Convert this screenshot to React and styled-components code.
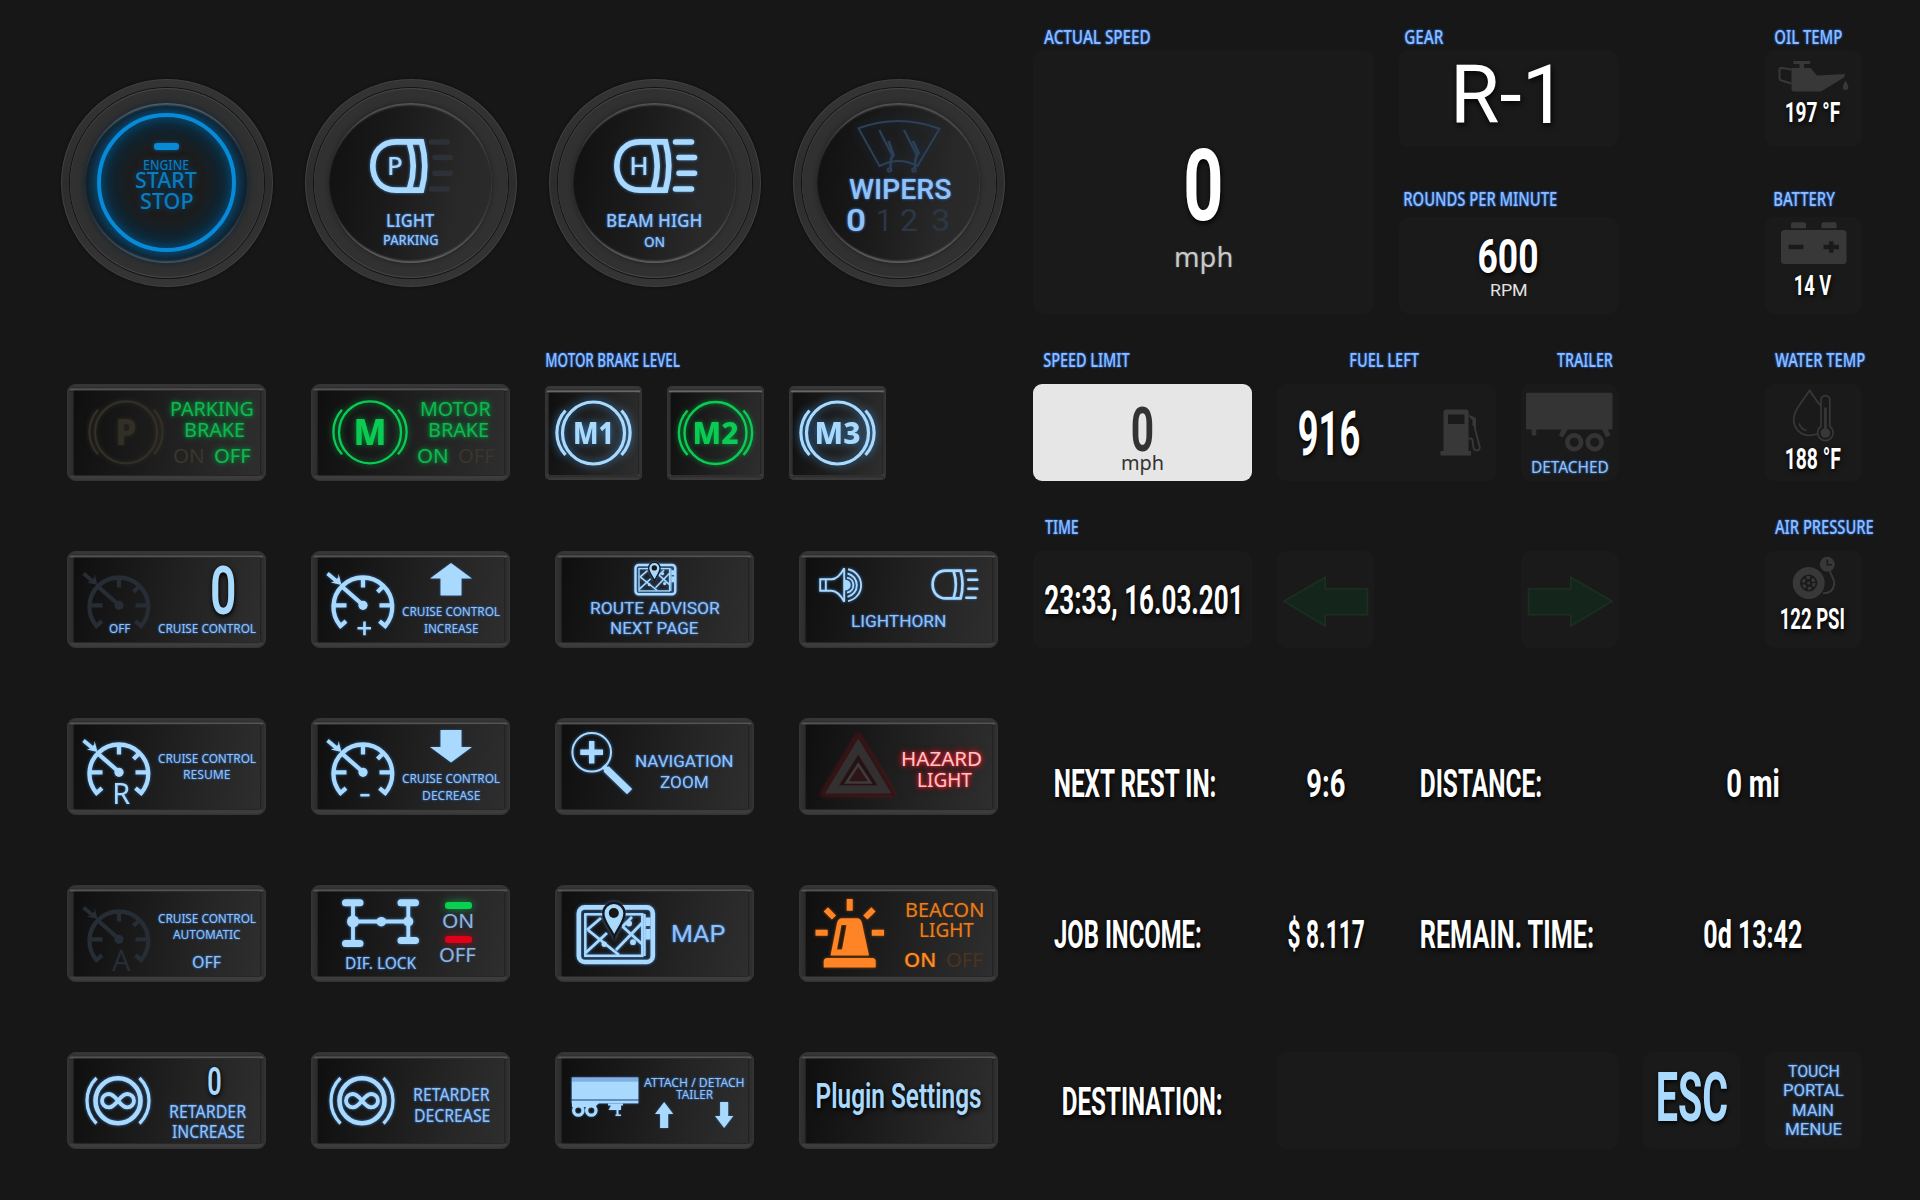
import React, { useLayoutEffect, useRef, useState } from 'react';
import styled, { createGlobalStyle, css } from 'styled-components';

const ICE = '#a9dafe';
const SANS = '"Noto Sans", "Open Sans", sans-serif';
const TECH = 'Roboto, "Noto Sans", sans-serif';

const GlobalStyle = createGlobalStyle`
  body { margin: 0; background: #171717; overflow: hidden; }
  * { box-sizing: border-box; }
`;

/* ---------- text ---------- */

const tones = {
  caption: css`color: #92c2f5; text-shadow: 0 0 2px #3c74c4, 0 0 3px #27508a;`,
  title: css`color: #8dbcfc; text-shadow: 0 0 2px #2f74e0, 0 0 3px #1d55b4;`,
  value: css`color: #ffffff; text-shadow: 1px 2px 6px #000000;`,
  unit: css`color: #c9c9c9; text-shadow: 0 0 2px #555555;`,
  unitLight: css`color: #e4e4e4;`,
  ice: css`color: ${ICE}; text-shadow: 1px 2px 6px #000000;`,
  dark: css`color: #333333;`,
  green: css`color: #12b552; text-shadow: 0 0 6px #0a9a40, 0 0 3px #067a30;`,
  engine: css`color: #0a7cc0; text-shadow: 0 0 8px #07517e;`,
  hazard: css`color: #ffc4c8; text-shadow: 0 0 3px #f0303c, 0 0 6px #c81420, 0 0 8px #a01018;`,
  amber: css`color: #e87e20; text-shadow: 0 0 2px #7a3c08;`,
  amberOn: css`color: #ff8a24; text-shadow: 0 0 2px #8a4408;`,
  amberOff: css`color: #4c331e;`,
  oliveOff: css`color: #39372d;`,
  dim: css`color: #2b3746;`,
  lock: css`color: #8fb3dc; text-shadow: 0 0 2px #345c94;`,
};

const TextSlot = styled.div`
  flex: none;
  width: ${(p) => p.$w}px;
  height: ${(p) => p.$cap}px;
  margin-top: ${(p) => p.$mt || 0}px;
  margin-left: ${(p) => p.$ml || 0}px;
  font-family: ${(p) => (p.$tech ? TECH : SANS)};
  font-size: ${(p) => p.$cap / 0.713}px;
  font-weight: ${(p) => p.$weight || 400};
  line-height: ${(p) => p.$cap}px;
  white-space: nowrap;
  ${(p) => tones[p.$tone || 'caption']}
`;

const Run = styled.span`
  display: inline-block;
  transform-origin: 0 0;
`;

/* A single line squeezed to an exact ink width, capitals filling its height. */
function Txt({ w, cap, mt, ml, tech, weight, tone, children }) {
  const ref = useRef(null);
  const [transform, setTransform] = useState('none');
  useLayoutEffect(() => {
    const ctx = document.createElement('canvas').getContext('2d');
    const cs = getComputedStyle(ref.current);
    ctx.font = `${cs.fontWeight} ${cs.fontSize} ${cs.fontFamily}`;
    const m = ctx.measureText(ref.current.textContent);
    const scale = w / (m.actualBoundingBoxRight + m.actualBoundingBoxLeft);
    const dx = m.actualBoundingBoxLeft * scale;
    const dy = cap / 2 - (m.fontBoundingBoxAscent - m.fontBoundingBoxDescent) / 2;
    setTransform(`translate(${dx}px, ${dy}px) scaleX(${scale})`);
  }, [w, cap]);
  return (
    <TextSlot $w={w} $cap={cap} $mt={mt} $ml={ml} $tech={tech} $weight={weight} $tone={tone}>
      <Run ref={ref} style={{ transform }}>{children}</Run>
    </TextSlot>
  );
}

/* ---------- layout ---------- */

const Deck = styled.main`
  width: 1920px;
  height: 1200px;
  padding: 0 58px 0 57px;
  display: grid;
  grid-template-columns: repeat(15, 97px);
  column-gap: 25px;
  grid-template-rows: 50px 97px repeat(6, 70px 97px);
  background: #171717;
`;

const Slot = styled.div`
  grid-column: ${(p) => p.$c} / span ${(p) => p.$cs || 1};
  grid-row: ${(p) => p.$r * 2} / span ${(p) => (p.$rs ? p.$rs * 2 - 1 : 1)};
  display: flex;
  justify-content: center;
  align-items: center;
`;

const Title = styled.div`
  grid-column: ${(p) => p.$c} / span ${(p) => p.$cs || 1};
  grid-row: ${(p) => p.$r * 2 - 1};
  align-self: end;
  padding-left: ${(p) => p.$pl}px;
  padding-bottom: ${(p) => p.$pb}px;
`;

const Panel = styled(Slot)`
  flex-direction: column;
  justify-content: flex-start;
  padding-top: ${(p) => p.$pt || 0}px;
  border-radius: 9px;
  background: ${(p) => (p.$light ? '#e6e6e6' : '#1a1a1a')};
`;

const RowPanel = styled(Panel)`
  flex-direction: row;
  align-items: flex-start;
  padding-left: 22px;
`;

const Info = styled(Slot)`
  justify-content: ${(p) => (p.$left ? 'flex-start' : 'center')};
  align-items: flex-start;
  padding-top: ${(p) => p.$pt}px;
  padding-left: ${(p) => p.$left || 0}px;
`;

const Stack = styled.div`
  flex: none;
  width: ${(p) => p.$w}px;
  padding-top: ${(p) => p.$pt || 0}px;
  display: flex;
  flex-direction: column;
  align-items: center;
`;

const Line = styled.div`
  display: flex;
  flex: none;
  align-items: flex-start;
  width: ${(p) => (p.$full ? '100%' : 'auto')};
  gap: ${(p) => p.$gap || 0}px;
  margin-top: ${(p) => p.$mt || 0}px;
  margin-left: ${(p) => p.$ml || 0}px;
`;

/* ---------- controls ---------- */

const Bezel = styled.button`
  flex: none;
  width: 199px;
  height: 97px;
  padding: 7px 6px 6px 7px;
  border: 0;
  border-radius: 9px;
  background: linear-gradient(#383838 0, #343434 3px, #2b2b2b 4px, #5c5c5c 5px, #555 6px, #242424 7px, #2f2f2f 8px, #2f2f2f 90px, #2a2a2a 91px, #424242 92px, #3d3d3d 94px, #353535 97px);
  box-shadow: inset 2px 0 1px #343434, inset -2px 0 1px #343434;
`;

const SmallBezel = styled(Bezel)`
  width: 97px;
  height: 94px;
  padding: 7px 4px 5px 4px;
  border-radius: 5px;
  background: linear-gradient(#3b3b3b 0, #363636 3px, #2b2b2b 4px, #777 5px, #666 6px, #222 7px, #333 8px, #333 88px, #555 89px, #303030 90px, #3d3d3d 94px);
`;

const Face = styled.div`
  width: 100%;
  height: 100%;
  display: flex;
  flex-direction: ${(p) => (p.$column ? 'column' : 'row')};
  align-items: ${(p) => (p.$column ? 'center' : 'flex-start')};
  background: linear-gradient(100deg, #0f0f0f, #1a1a1a 35%, #242424 65%, #2e2e2e);
  box-shadow: 0 0 2px #0a0a0a;
`;

const Knob = styled.button`
  width: 212px;
  height: 208px;
  margin-top: 1px;
  border: 1px solid #424242;
  padding: 8px;
  border-radius: 50%;
  background: linear-gradient(#343434, #2d2d2d 50%, #353535);
  box-shadow: 0 0 3px #0d0d0d;
`;

const Collar = styled.div`
  width: 100%;
  height: 100%;
  border-radius: 50%;
  display: flex;
  justify-content: center;
  align-items: center;
  background: #313131;
  box-shadow: 0 0 0 1px #131313, inset 0 1px 1px #484848, inset 0 -1px 1px #484848;
`;

const Dial = styled.div`
  width: 163px;
  height: 160px;
  border-radius: 50%;
  display: flex;
  flex-direction: column;
  align-items: center;
  background: ${(p) =>
    p.$glow
      ? 'radial-gradient(closest-side, #1c1c1c 45%, #0d2533 74%, #0c3550 85%, #11222e 98%)'
      : 'linear-gradient(100deg, #101010, #1b1b1b 40%, #282828 75%, #2c2c2c)'};
  box-shadow: ${(p) =>
    p.$glow
      ? 'inset 0 3px 2px -1px #52626e, inset 0 -3px 2px -1px #465661, 0 0 9px #18242e'
      : 'inset 0 3px 2px -1px #585858, inset 0 -3px 2px -1px #626262, 0 0 5px #1f1f1f'};
`;

const EngineRing = styled.div`
  width: 139px;
  height: 139px;
  margin: 10px 0 0 0;
  border: 4.5px solid #078ad8;
  border-radius: 50%;
  display: flex;
  flex-direction: column;
  align-items: center;
  box-shadow: 0 0 8px #07507e, inset 0 0 14px #074a74;
`;

const Led = styled.div`
  flex: none;
  width: ${(p) => p.$w}px;
  height: 6.5px;
  margin-top: ${(p) => p.$mt}px;
  border-radius: 3px;
  background: ${(p) => p.$color};
  box-shadow: 0 0 ${(p) => p.$blur || 4}px ${(p) => p.$color}${(p) => (p.$blur ? 'aa' : '88')};
`;

/* ---------- icons ---------- */

const Art = styled.svg`
  flex: none;
  display: block;
  overflow: visible;
  color: ${(p) => p.$color || ICE};
  margin-top: ${(p) => p.$mt || 0}px;
  margin-left: ${(p) => p.$ml || 0}px;
  filter: ${(p) => (p.$glow ? `drop-shadow(0 0 ${p.$blur || 1.5}px ${p.$glow})` : 'none')};
`;

const Lit = styled.g`
  filter: drop-shadow(0 0 1.5px #3b78c0);
`;

const Letter = styled.text`
  font-family: ${SANS};
  fill: currentColor;
  text-anchor: middle;
`;

function Brake({ width = 92, height = 84, cx = 52, cy = 41.3, sw = 2.3, label, lw, cap = 25, color, glow, blur }) {
  return (
    <Art width={width} height={height} viewBox={`0 0 ${width} ${height}`} fill="none" stroke="currentColor" strokeWidth={sw} $color={color} $glow={glow} $blur={blur}>
      <circle cx={cx} cy={cy} r="31" />
      <path d={`M${cx - 28} ${cy - 22.5}A33 33 0 0 0 ${cx - 28} ${cy + 22}M${cx + 28} ${cy - 22.5}A33 33 0 0 1 ${cx + 28} ${cy + 22}`} />
      <Letter x={cx} y={cy + cap / 2} stroke="none" fontSize={cap / 0.714} fontWeight="800" textLength={lw} lengthAdjust="spacingAndGlyphs">{label}</Letter>
    </Art>
  );
}

function Gauge({ mark, dim, cap = 20.6 }) {
  return (
    <Art width="80" height="84" viewBox="0 0 80 84" fill="none" stroke="currentColor" strokeWidth="4.3" $color={dim ? '#262d35' : ICE} $glow={dim ? null : '#2d5f9a'}>
      <path d="M28 63.2L22.5 68A29.4 29.4 0 1 1 67.2 68L61.5 63.2" />
      <path d="M45 19.5V29.5M14.5 47.3H28.5M61.5 47.3H75M65.5 28L59.5 34M25 29.5L45 47" />
      <circle cx="45" cy="47.3" r="4.6" fill="currentColor" stroke="none" />
      <path d="M9.5 15.5L19 23.5" strokeWidth="3.6" />
      <path d="M23.5 27L12.8 24.6L16.8 23.2L20.2 19.4L20.6 15.8Z" fill="currentColor" stroke="none" />
      {mark === '+' && <path d="M39.5 70.2H53M46.5 63.5V77.2" strokeWidth="2.6" />}
      {mark === '-' && <path d="M42.3 70.2H51.5" strokeWidth="2.6" />}
      {(mark === 'R' || mark === 'A') && (
        <Letter x="47.2" y="78.6" stroke="none" fontSize={cap / 0.714} fontWeight="400">{mark}</Letter>
      )}
    </Art>
  );
}

function Lamp({ width = 80, height = 54, mt, ml, letter, beamsOff, sw = 5.6 }) {
  const beams = <path d="M101.5 39.7H117.5M105 55.3H120.5M105 71H120.5M101.5 86.7H117.5" strokeWidth={sw - 0.1} stroke={beamsOff ? '#2c3137' : 'currentColor'} />;
  return (
    <Art width={width} height={height} viewBox="40 36.7 80 54" fill="none" stroke="currentColor" strokeWidth={sw} strokeLinecap="round" $mt={mt} $ml={ml}>
      <Lit>
        <path d="M66 39.6H91.5Q98.2 63.7 91.5 87.8H66C51 87.8 42.8 77 42.8 63.7S51 39.6 66 39.6Z" />
        <path d="M79.5 41Q87 63.7 79.5 86.5" />
        {!beamsOff && beams}
        {letter && <Letter x="65" y="72.7" stroke="none" fontSize="26" fontWeight="500">{letter}</Letter>}
      </Lit>
      {beamsOff && beams}
    </Art>
  );
}

function WiperIcon() {
  return (
    <Art width="84" height="54" viewBox="40 16 84 54" fill="none" stroke="currentColor" strokeWidth="2" $mt={16} $ml={0} $color="#2d4056" $glow="#1d2f44" $blur={4}>
      <path d="M41.5 25.3Q82 10.5 122.5 25.7L100.5 63Q82 53 62.5 63Z" />
      <path d="M62.3 27L75 52M87 27L99.8 52" strokeWidth="2.2" />
      <path d="M71.5 38L76.5 52Q73 54 73.5 66M96 38L101.5 50Q97.5 54 98 66" strokeWidth="2.6" />
      <circle cx="72.5" cy="67" r="1.8" /><circle cx="97" cy="67" r="1.8" />
    </Art>
  );
}

function MapIcon({ width = 80, height = 63, mt, ml }) {
  return (
    <Art width={width} height={height} viewBox="14 10 80 63" fill="none" stroke="currentColor" $mt={mt} $ml={ml} $glow="#3b78c0">
      <rect x="16.8" y="15.4" width="74" height="54.6" rx="6" strokeWidth="4.6" />
      <rect x="23.3" y="22.3" width="57" height="41.5" strokeWidth="2.5" />
      <path d="M82.6 22V64" strokeWidth="2.2" />
      <path d="M86 25.5V34M86 37V47.5" strokeWidth="5" />
      <path d="M24 60.5L45 41M25 38L39 26M26 38L57 63M54 58L80 31M60.5 34.5L80 52M60.5 34.5L70 25" strokeWidth="2.8" />
      <g fill="currentColor" stroke="none"><circle cx="42.3" cy="52.3" r="2.7" /><circle cx="71" cy="50.2" r="2.9" /><circle cx="67" cy="31.5" r="3" /></g>
      <path d="M52.3 45C49.5 37 41.3 30.5 41.3 21.3A10.6 10.6 0 0 1 62.5 21.3C62.5 30.5 55 37 52.3 45Z" fill="currentColor" stroke="#171717" strokeWidth="2.4" />
      <circle cx="51.8" cy="21" r="5" fill="#171717" stroke="none" />
    </Art>
  );
}

function HornIcon() {
  return (
    <Art width="46" height="36" viewBox="12.5 8.7 46 36" fill="none" stroke="currentColor" strokeWidth="1.9" $mt={8.7} $ml={12.5} $glow="#3b78c0">
      <path d="M13.7 21H25C30 21 35 15 37.7 10V43.5C35 38.5 30 32.5 25 32.5H13.7ZM19.3 21V32.5" />
      <path d="M39 22.5A4 4 0 0 1 39 31Z" fill="currentColor" />
      <path d="M40.5 19.3A7.6 7.6 0 0 1 40.5 34.3M41 15.2A12 12 0 0 1 41 38.6M41.5 11A16.2 16.2 0 0 1 41.5 42.8" />
    </Art>
  );
}

function MagnifierIcon() {
  return (
    <Art width="70" height="84" viewBox="0 0 70 84" fill="none" stroke="currentColor" $glow="#3b78c0">
      <circle cx="29.7" cy="27.3" r="19.3" strokeWidth="2" />
      <path d="M18.3 27.3H41M29.7 16V38.5" strokeWidth="5.4" />
      <path d="M41.3 41L45 44.8" strokeWidth="5" />
      <path d="M45.5 45.3L69.5 68.5" strokeWidth="7.6" transform="translate(-0.5 -0.5) scale(0.98)" />
    </Art>
  );
}

function HazardIcon() {
  return (
    <Art width="92" height="84" viewBox="0 0 92 84" fill="none" $glow="#6e1015" $blur={2}>
      <path d="M52.3 8L90 70.5H14.5Z" fill="#331416" />
      <path fillRule="evenodd" d="M52.3 13.5L85.5 68.5H19ZM52.3 29.5L33 60.5H71.6Z" fill="#333031" />
      <path d="M52.3 30.5L34 60H70.6Z" fill="#231315" />
      <path d="M52.3 39.5L40.5 57.5H64.2Z" stroke="#403a3b" strokeWidth="2.6" fill="#2b1517" />
    </Art>
  );
}

function BeaconIcon() {
  return (
    <Art width="92" height="84" viewBox="0 0 92 84" fill="currentColor" $color="#ff8426" $glow="#8a4408">
      <path fillRule="evenodd" d="M24.5 63.5L31 31Q32 26.3 36 26.3H51Q55 26.3 56 31L63 63.5ZM35.5 33L31 57.5H36L40.5 33Z" />
      <path d="M17.7 75.5V69.5Q17.7 66 21.2 66H66.2Q69.7 66 69.7 69.5V75.5Z" />
      <path d="M43.7 7V18.8M19.8 17.3L28 25.5M67.5 17.3L59.3 25.5M9.5 40.7H21.7M65.8 40.7H78" stroke="currentColor" strokeWidth="6" />
    </Art>
  );
}

function AxleIcon() {
  return (
    <Art width="82" height="49" viewBox="22 7 82 49" fill="none" stroke="currentColor" strokeLinecap="round" $mt={6.5} $glow="#3b78c0">
      <path d="M35 11V51M90.3 11V49M35 29.5H90" strokeWidth="3.8" />
      <path d="M27.5 10.7H42M27.5 51.5H42M83 10.7H97.5M83 48.6H97.5" strokeWidth="7" />
      <g fill="currentColor" stroke="none"><circle cx="35" cy="29.5" r="6" /><circle cx="63.3" cy="29.7" r="4.8" /><circle cx="90.3" cy="29.5" r="5" /></g>
    </Art>
  );
}

function RetarderIcon() {
  return (
    <Art width="86" height="84" viewBox="0 0 86 84" fill="none" stroke="currentColor" $glow="#3b78c0">
      <circle cx="44" cy="41.7" r="22.5" strokeWidth="4.6" />
      <path d="M22.5 19A32 32 0 0 0 22.5 64.5M65.5 19A32 32 0 0 1 65.5 64.5" strokeWidth="3.2" />
      <path d="M44 41.7C39 35.5 36.5 35 34.7 35A6.7 6.7 0 0 0 34.7 48.4C36.5 48.4 39 48 44 41.7C49 35.5 51.5 35 53.3 35A6.7 6.7 0 0 1 53.3 48.4C51.5 48.4 49 48 44 41.7Z" strokeWidth="3.8" />
    </Art>
  );
}

function BlockArrow({ down, width = 42, height = 32.5, mt }) {
  return (
    <Art width={width} height={height} viewBox="0 0 42 32.5" preserveAspectRatio="none" fill="currentColor" $mt={mt} $glow="#2d5f9a" $blur={0.8}>
      <path transform={down ? 'rotate(180 21 16.25)' : undefined} d="M21 0L42 15.5H31.5V32.5H10.5V15.5H0Z" />
    </Art>
  );
}

function SlimArrow({ down }) {
  return (
    <Art width="18.3" height="26" viewBox="0 0 18.3 26" fill="currentColor" $glow="#2d5f9a" $blur={0.8}>
      <path transform={down ? 'rotate(180 9.15 13)' : undefined} d="M9.15 0L18.3 12H13.2V26H5.1V12H0Z" />
    </Art>
  );
}

function TruckBodyIcon() {
  return (
    <Art width="80" height="84" viewBox="0 0 80 84" fill="currentColor" $glow="#2d5f9a" $blur={0.8}>
      <rect x="9.7" y="18.3" width="66.7" height="4.5" fill="#7fb0e4" />
      <rect x="9.7" y="22.5" width="66.7" height="17.5" />
      <rect x="9.7" y="40" width="66.7" height="2" fill="#5f8cc4" />
      <rect x="9.7" y="42" width="66.7" height="2.4" />
      <path d="M10 44H37L33 48H10ZM46 44.5H61V46.5H59V51H56.5V55.5H59V57H53.5V55.5H54.5V51H46.5L49 46.5H46Z" />
      <g fill="none" stroke="currentColor" strokeWidth="3.2"><circle cx="16.3" cy="51.5" r="4.7" /><circle cx="29.3" cy="51.5" r="4.7" /></g>
    </Art>
  );
}

const GREY = '#383838';

function OilIcon() {
  return (
    <Art width="71" height="31" viewBox="0 0 71 31" fill="currentColor" $mt={11} $color={GREY}>
      <path d="M15.5 0H32V3H26V7H32.5L39 14.5L67 13L66 16.5L43 30.5H16Q13.5 30.5 13.5 28V7H21.5V3H15.5Z" />
      <path d="M13.5 8.5L4 7Q1.5 6.5 1.5 9V17Q1.5 19 3.5 19.5L13.5 22.5" fill="none" stroke="currentColor" strokeWidth="2" />
      <path d="M67.5 19.5Q70.3 24 70.3 26.2A2.7 2.7 0 0 1 64.9 26.2Q64.9 24 67.5 19.5Z" />
    </Art>
  );
}

function BatteryIcon() {
  return (
    <Art width="66" height="42" viewBox="0 0 66 42" fill="currentColor" $mt={5} $color={GREY}>
      <path d="M10 6.3V2Q10 .2 12 .2H23Q25 .2 25 2V6.3ZM40.5 6.3V2Q40.5 .2 42.5 .2H53.5Q55.5 .2 55.5 2V6.3Z" />
      <rect x="0" y="8" width="65.5" height="34" rx="3.5" />
      <path d="M7.5 25H22.5M42.5 25H58M50.2 19.3V30.8" stroke="#1a1a1a" strokeWidth="4.5" />
    </Art>
  );
}

function WaterIcon() {
  return (
    <Art width="97" height="60" viewBox="0 0 97 60" fill="none" stroke="currentColor" strokeWidth="1.7" $color={GREY}>
      <path d="M52 50Q48.5 51.3 44.5 51.3C35.5 51.3 28.7 44.5 28.7 35.5C28.7 27 37 18 44.7 6.5C48 12 51.5 16.5 55 21" />
      <path d="M34 39.5Q36 45 41.5 46.5" />
      <path d="M56 42.3V16A4.4 4.4 0 0 1 64.8 16V42.3A7.8 7.8 0 1 1 56 42.3Z" />
      <circle cx="60.4" cy="49" r="4.8" fill="currentColor" stroke="none" />
      <path d="M60.4 48V23.5" strokeWidth="2.6" />
    </Art>
  );
}

function TireIcon() {
  return (
    <Art width="97" height="52" viewBox="0 0 97 52" fill="none" stroke="currentColor" $color={GREY}>
      <circle cx="43.7" cy="32" r="12.3" strokeWidth="7.4" />
      <circle cx="43.7" cy="32" r="5.4" strokeWidth="3" strokeDasharray="3.6 2.05" />
      <circle cx="43.7" cy="32" r="1.6" fill="currentColor" stroke="none" />
      <circle cx="62.3" cy="13.3" r="7.5" fill="currentColor" stroke="none" />
      <path d="M62.3 8.5V13.8H67" stroke="#1a1a1a" strokeWidth="1.6" />
      <path d="M65 20C66 25 69.3 27 69.3 33Q68 42.5 58 42.3" strokeWidth="1.9" />
    </Art>
  );
}

function PumpIcon() {
  return (
    <Art width="42" height="47" viewBox="0 0 42 47" fill="currentColor" $ml={80} $mt={25} $color={GREY}>
      <path fillRule="evenodd" d="M3.5 42V3Q3.5 .5 6 .5H26Q28.5 .5 28.5 3V42H31V46.5H.5V42ZM8 5.5V15H24.5V5.5Z" />
      <path d="M28.5 29.5H31Q33 30 33 35Q33 41.5 37 41.5Q40.5 41 39.5 37L35 20V9.5L28.5 6.5" fill="none" stroke="currentColor" strokeWidth="1.9" />
      <path d="M31 7L35.5 9V18L32.5 16.5V11L30 9Z" />
    </Art>
  );
}

function TrailerIcon() {
  return (
    <Art width="97" height="69" viewBox="0 0 97 69" fill="currentColor" $color="#343434">
      <rect x="5" y="8.7" width="86.5" height="36.8" rx="1.5" />
      <path d="M10.7 45H15.3V50.5Q15.3 51.8 13 51.8T10.7 50.5ZM40.5 45H47L42 53.5L38 51.5ZM81 45H86.5L89.5 51L85 53.5Z" />
      <g fill="none" stroke="currentColor" strokeWidth="4.6"><circle cx="53.2" cy="58.3" r="6.9" /><circle cx="73.7" cy="58.3" r="6.9" /></g>
    </Art>
  );
}

function TurnArrow({ right }) {
  return (
    <Art width="97" height="97" viewBox="0 0 97 97" fill="#14261b" stroke="#1b2f20" strokeWidth="1.6">
      <path transform={right ? 'matrix(-1 0 0 1 98 0)' : undefined} d="M6.8 50.3L48.3 26.2V37.8H90.5V63.8H48.3V75.2Z" />
    </Art>
  );
}

/* ---------- composite parts ---------- */

function Key({ c, r, column, children }) {
  return (
    <Slot $c={c} $cs={2} $r={r}>
      <Bezel><Face $column={column}>{children}</Face></Bezel>
    </Slot>
  );
}

function Rotary({ c, glow, children }) {
  return (
    <Slot $c={c} $cs={2} $r={1} $rs={2}>
      <Knob><Collar><Dial $glow={glow}>{children}</Dial></Collar></Knob>
    </Slot>
  );
}

function Heading({ c, r, w, pl = 11, pb, children }) {
  return (
    <Title $c={c} $r={r} $pl={pl} $pb={pb}>
      <Txt w={w} cap={14.4} weight={500} tone="title">{children}</Txt>
    </Title>
  );
}

function Entry({ c, cs, r, pt, left, w, children }) {
  return (
    <Info $c={c} $cs={cs} $r={r} $pt={pt} $left={left}>
      <Txt tech w={w} cap={27.6} weight={700} tone="value">{children}</Txt>
    </Info>
  );
}

const Cruise = ({ mt }) => <Txt w={98} cap={9.6} mt={mt}>CRUISE CONTROL</Txt>;

const BRAKE_LEVELS = [
  { c: 5, label: 'M1', lw: 41 },
  { c: 6, label: 'M2', lw: 46, active: true },
  { c: 7, label: 'M3', lw: 46 },
];

export default function App() {
  return (
    <>
      <GlobalStyle />
      <Deck>
        {/* rotary switches */}
        <Rotary c={1} glow>
          <EngineRing>
            <Led $w={25} $mt={26.5} $color="#078ad8" />
            <Txt w={44.4} cap={9.8} mt={11.2} weight={500} tone="engine">ENGINE</Txt>
            <Txt w={61.4} cap={15.8} mt={3} weight={500} tone="engine">START</Txt>
            <Txt w={52} cap={16} mt={4} weight={500} tone="engine">STOP</Txt>
          </EngineRing>
        </Rotary>
        <Rotary c={3}>
          <Lamp mt={36.7} ml={-2} letter="P" beamsOff />
          <Txt w={47.6} cap={13.3} mt={21.3} weight={500}>LIGHT</Txt>
          <Txt w={54} cap={10.3} mt={7.4} weight={500}>PARKING</Txt>
        </Rotary>
        <Rotary c={5}>
          <Lamp mt={36.7} ml={-2} letter="H" />
          <Txt w={94.3} cap={13.3} mt={21.3} weight={500}>BEAM HIGH</Txt>
          <Txt w={20} cap={10.3} mt={9.7} ml={-1} weight={500}>ON</Txt>
        </Rotary>
        <Rotary c={7}>
          <WiperIcon />
          <Txt tech w={102} cap={19.3} mt={7} ml={-2.5} weight={500}>WIPERS</Txt>
          <Line $mt={10.4}>
            <Txt tech w={18} cap={22.3} ml={-2} weight={500}>0</Txt>
            <Txt tech w={9} cap={22.3} ml={13} tone="dim">1</Txt>
            <Txt tech w={16.5} cap={22.3} ml={14} tone="dim">2</Txt>
            <Txt tech w={16.5} cap={22.3} ml={14.5} tone="dim">3</Txt>
          </Line>
        </Rotary>

        {/* brakes */}
        <Key c={1} r={3}>
          <Brake label="P" lw={21} color="#322f26" glow="#2c2a22" blur={2} />
          <Stack $w={92} $pt={11}>
            <Txt w={82} cap={14.5} tone="green">PARKING</Txt>
            <Txt w={59} cap={14.3} mt={6.8} ml={5} tone="green">BRAKE</Txt>
            <Line $mt={11} $gap={12}>
              <Txt w={29.5} cap={14.3} tone="oliveOff">ON</Txt>
              <Txt w={35.5} cap={14.3} tone="green">OFF</Txt>
            </Line>
          </Stack>
        </Key>
        <Key c={3} r={3}>
          <Brake label="M" lw={33} color="#0ccb55" glow="#068a38" blur={3} />
          <Stack $w={92} $pt={11}>
            <Txt w={70} cap={14.5} tone="green">MOTOR</Txt>
            <Txt w={59} cap={14.3} mt={6.8} ml={5} tone="green">BRAKE</Txt>
            <Line $mt={11} $gap={12}>
              <Txt w={29.5} cap={14.3} tone="green">ON</Txt>
              <Txt w={35.5} cap={14.3} tone="oliveOff">OFF</Txt>
            </Line>
          </Stack>
        </Key>
        <Heading c={5} r={3} w={134} pl={1} pb={16.3}>MOTOR BRAKE LEVEL</Heading>
        {BRAKE_LEVELS.map((b) => (
          <Slot key={b.label} $c={b.c} $r={3}>
            <SmallBezel>
              <Face>
                <Brake width={89} height={82} cx={44.5} cy={40} sw={b.active ? 2.4 : 3.2} label={b.label} lw={b.lw} cap={21}
                  color={b.active ? '#0ccb55' : ICE} glow={b.active ? '#068a38' : '#3a7cb4'} blur={b.active ? 2.5 : 4} />
              </Face>
            </SmallBezel>
          </Slot>
        ))}

        {/* cruise control row */}
        <Key c={1} r={4}>
          <Stack $w={80}>
            <Gauge dim />
            <Txt w={21.6} cap={9.4} mt={-18} ml={11}>OFF</Txt>
          </Stack>
          <Stack $w={106} $pt={8.7}>
            <Txt tech w={22.5} cap={47} ml={33} weight={600} tone="ice">0</Txt>
            <Cruise mt={10} />
          </Stack>
        </Key>
        <Key c={3} r={4}>
          <Gauge mark="+" />
          <Stack $w={106} $pt={5.3}>
            <BlockArrow />
            <Cruise mt={11.5} />
            <Txt w={54} cap={9.6} mt={7}>INCREASE</Txt>
          </Stack>
        </Key>
        <Key c={5} r={4} column>
          <MapIcon width={43} height={33.9} mt={3.5} />
          <Txt tech w={129} cap={12.3} mt={6.8}>ROUTE ADVISOR</Txt>
          <Txt tech w={88} cap={12.3} mt={7.2}>NEXT PAGE</Txt>
        </Key>
        <Key c={7} r={4} column>
          <Line $full>
            <HornIcon />
            <Lamp width={46} height={31} mt={11} ml={66.5} sw={4.6} />
          </Line>
          <Txt tech w={93} cap={12.3} mt={12.6} ml={-1.5}>LIGHTHORN</Txt>
        </Key>

        <Key c={1} r={5}>
          <Gauge mark="R" />
          <Stack $w={106} $pt={28.7}>
            <Cruise />
            <Txt w={46} cap={9.6} mt={7}>RESUME</Txt>
          </Stack>
        </Key>
        <Key c={3} r={5}>
          <Gauge mark="-" />
          <Stack $w={106} $pt={5.3}>
            <BlockArrow down />
            <Cruise mt={11.5} />
            <Txt w={57} cap={9.6} mt={7}>DECREASE</Txt>
          </Stack>
        </Key>
        <Key c={5} r={5}>
          <MagnifierIcon />
          <Stack $w={104} $pt={30}>
            <Txt tech w={96.5} cap={12}>NAVIGATION</Txt>
            <Txt tech w={48} cap={12} mt={8.7}>ZOOM</Txt>
          </Stack>
        </Key>
        <Key c={7} r={5}>
          <HazardIcon />
          <Stack $w={88} $pt={27}>
            <Txt w={79.5} cap={14.3} tone="hazard">HAZARD</Txt>
            <Txt w={54.5} cap={14.5} mt={7} ml={6} tone="hazard">LIGHT</Txt>
          </Stack>
        </Key>

        <Key c={1} r={6}>
          <Gauge mark="A" dim />
          <Stack $w={106} $pt={21.5}>
            <Cruise />
            <Txt w={68} cap={9.6} mt={7}>AUTOMATIC</Txt>
            <Txt w={28.3} cap={12} mt={16}>OFF</Txt>
          </Stack>
        </Key>
        <Key c={3} r={6}>
          <Stack $w={126}>
            <AxleIcon />
            <Txt w={70.5} cap={12.2} mt={9.5}>DIF. LOCK</Txt>
          </Stack>
          <Stack $w={28}>
            <Led $w={27} $mt={10} $color="#08d052" $blur={8} />
            <Txt w={30} cap={14.3} mt={5.5} tone="lock">ON</Txt>
            <Led $w={27} $mt={8.2} $color="#e00018" $blur={8} />
            <Txt w={35.5} cap={14.3} mt={5.5} tone="lock">OFF</Txt>
          </Stack>
        </Key>
        <Key c={5} r={6}>
          <MapIcon mt={10} ml={14} />
          <Stack $w={85} $pt={32.7}>
            <Txt tech w={53} cap={17.2}>MAP</Txt>
          </Stack>
        </Key>
        <Key c={7} r={6}>
          <BeaconIcon />
          <Stack $w={92} $pt={10.8}>
            <Txt w={77} cap={14.4} tone="amber">BEACON</Txt>
            <Txt w={54.5} cap={14.6} mt={6.3} ml={6} tone="amber">LIGHT</Txt>
            <Line $mt={15.2} $gap={12}>
              <Txt w={29.7} cap={14.3} weight={500} tone="amberOn">ON</Txt>
              <Txt w={35.5} cap={14.3} tone="amberOff">OFF</Txt>
            </Line>
          </Stack>
        </Key>

        <Key c={1} r={7}>
          <RetarderIcon />
          <Stack $w={96} $pt={9.3}>
            <Txt tech w={13} cap={27.7} ml={12} weight={600} tone="ice">0</Txt>
            <Txt w={76} cap={12.7} mt={9.8}>RETARDER</Txt>
            <Txt w={72} cap={12.7} mt={8}>INCREASE</Txt>
          </Stack>
        </Key>
        <Key c={3} r={7}>
          <RetarderIcon />
          <Stack $w={96} $pt={29.8}>
            <Txt w={75.5} cap={12.7}>RETARDER</Txt>
            <Txt w={74.5} cap={12.7} mt={8.3}>DECREASE</Txt>
          </Stack>
        </Key>
        <Key c={5} r={7}>
          <TruckBodyIcon />
          <Stack $w={104} $pt={18.6}>
            <Txt w={100} cap={9.3}>ATTACH / DETACH</Txt>
            <Txt w={37} cap={9.3} mt={3.2}>TAILER</Txt>
            <Line $mt={2.6} $gap={42}>
              <SlimArrow />
              <SlimArrow down />
            </Line>
          </Stack>
        </Key>
        <Key c={7} r={7} column>
          <Txt tech w={164} cap={24.7} mt={25.3} weight={600} tone="ice">Plugin Settings</Txt>
        </Key>

        {/* gauges */}
        <Heading c={9} r={1} w={106} pb={5.7}>ACTUAL SPEED</Heading>
        <Panel $c={9} $cs={3} $r={1} $rs={2} $pt={98.5}>
          <Txt tech w={34.5} cap={71} weight={700} tone="value">0</Txt>
          <Txt w={56} cap={20} mt={27.3} tone="unit">mph</Txt>
        </Panel>
        <Heading c={12} r={1} w={38.5} pl={5.6} pb={5.7}>GEAR</Heading>
        <Panel $c={12} $cs={2} $r={1} $pt={16.3}>
          <Txt tech w={94.5} cap={57.7} ml={-10} tone="value">R-1</Txt>
        </Panel>
        <Heading c={15} r={1} w={67} pl={9.5} pb={5.7}>OIL TEMP</Heading>
        <Panel $c={15} $r={1}>
          <OilIcon />
          <Txt tech w={54} cap={20} mt={9.7} ml={-1} weight={700} tone="value">197 °F</Txt>
        </Panel>

        <Heading c={12} r={2} w={153} pl={5} pb={11}>ROUNDS PER MINUTE</Heading>
        <Panel $c={12} $cs={2} $r={2} $pt={21.7}>
          <Txt tech w={58.5} cap={34} weight={700} tone="value">600</Txt>
          <Txt tech w={35.5} cap={11.5} mt={12.6} tone="unitLight">RPM</Txt>
        </Panel>
        <Heading c={15} r={2} w={61} pl={8.6} pb={11}>BATTERY</Heading>
        <Panel $c={15} $r={2}>
          <BatteryIcon />
          <Txt tech w={36.5} cap={20} mt={10.5} weight={700} tone="value">14 V</Txt>
        </Panel>

        <Heading c={9} r={3} w={86} pb={16.3}>SPEED LIMIT</Heading>
        <Panel $c={9} $cs={2} $r={3} $pt={24.3} $light>
          <Txt tech w={20.6} cap={43.7} ml={-1} weight={700} tone="dark">0</Txt>
          <Txt w={40.5} cap={14.6} mt={4.2} tone="dark">mph</Txt>
        </Panel>
        <Heading c={11} r={3} w={69.5} pl={73} pb={16.3}>FUEL LEFT</Heading>
        <RowPanel $c={11} $cs={2} $r={3}>
          <Txt tech w={60.5} cap={43.7} mt={27.8} weight={700} tone="value">916</Txt>
          <PumpIcon />
        </RowPanel>
        <Heading c={13} r={3} w={56} pl={36} pb={16.3}>TRAILER</Heading>
        <Panel $c={13} $r={3}>
          <TrailerIcon />
          <Txt w={76.5} cap={12} mt={7.5} ml={1} tone="caption">DETACHED</Txt>
        </Panel>
        <Heading c={15} r={3} w={90} pl={10} pb={16.3}>WATER TEMP</Heading>
        <Panel $c={15} $r={3}>
          <WaterIcon />
          <Txt tech w={55} cap={20.4} mt={4.5} ml={-1} weight={700} tone="value">188 °F</Txt>
        </Panel>

        <Heading c={9} r={4} w={33.5} pl={12} pb={17}>TIME</Heading>
        <Panel $c={9} $cs={2} $r={4} $pt={34.5}>
          <Txt tech w={194} cap={28.7} ml={-2} weight={700} tone="value">23:33, 16.03.201</Txt>
        </Panel>
        <Panel $c={11} $r={4}><TurnArrow /></Panel>
        <Panel $c={13} $r={4}><TurnArrow right /></Panel>
        <Heading c={15} r={4} w={98.5} pl={10} pb={17}>AIR PRESSURE</Heading>
        <Panel $c={15} $r={4}>
          <TireIcon />
          <Txt tech w={63} cap={20.4} mt={5.7} ml={-2} weight={700} tone="value">122 PSI</Txt>
        </Panel>

        {/* trip information */}
        <Entry c={9} cs={2} r={5} pt={51.8} left={22} w={161.5}>NEXT REST IN:</Entry>
        <Entry c={11} r={5} pt={51.8} w={37.5}>9:6</Entry>
        <Entry c={12} cs={2} r={5} pt={51.8} left={22} w={120}>DISTANCE:</Entry>
        <Entry c={14} cs={2} r={5} pt={51.8} w={52}>0 mi</Entry>

        <Entry c={9} cs={2} r={6} pt={35.5} left={21} w={146.5}>JOB INCOME:</Entry>
        <Entry c={11} r={6} pt={35.5} w={76}>$ 8.117</Entry>
        <Entry c={12} cs={2} r={6} pt={35.5} left={22} w={172.5}>REMAIN. TIME:</Entry>
        <Entry c={14} cs={2} r={6} pt={35.5} w={97.5}>0d 13:42</Entry>

        <Entry c={9} cs={2} r={7} pt={35.8} w={158.5}>DESTINATION:</Entry>
        <Panel $c={11} $cs={3} $r={7} />
        <Panel $c={14} $r={7} $pt={20}>
          <Txt tech w={69} cap={49} ml={1} weight={700} tone="ice">ESC</Txt>
        </Panel>
        <Panel $c={15} $r={7} $pt={14}>
          <Txt tech w={51.5} cap={11.4}>TOUCH</Txt>
          <Txt tech w={60} cap={11.4} mt={7.9}>PORTAL</Txt>
          <Txt tech w={40.5} cap={11.4} mt={7.9}>MAIN</Txt>
          <Txt tech w={56} cap={11.4} mt={7.9}>MENUE</Txt>
        </Panel>
      </Deck>
    </>
  );
}
